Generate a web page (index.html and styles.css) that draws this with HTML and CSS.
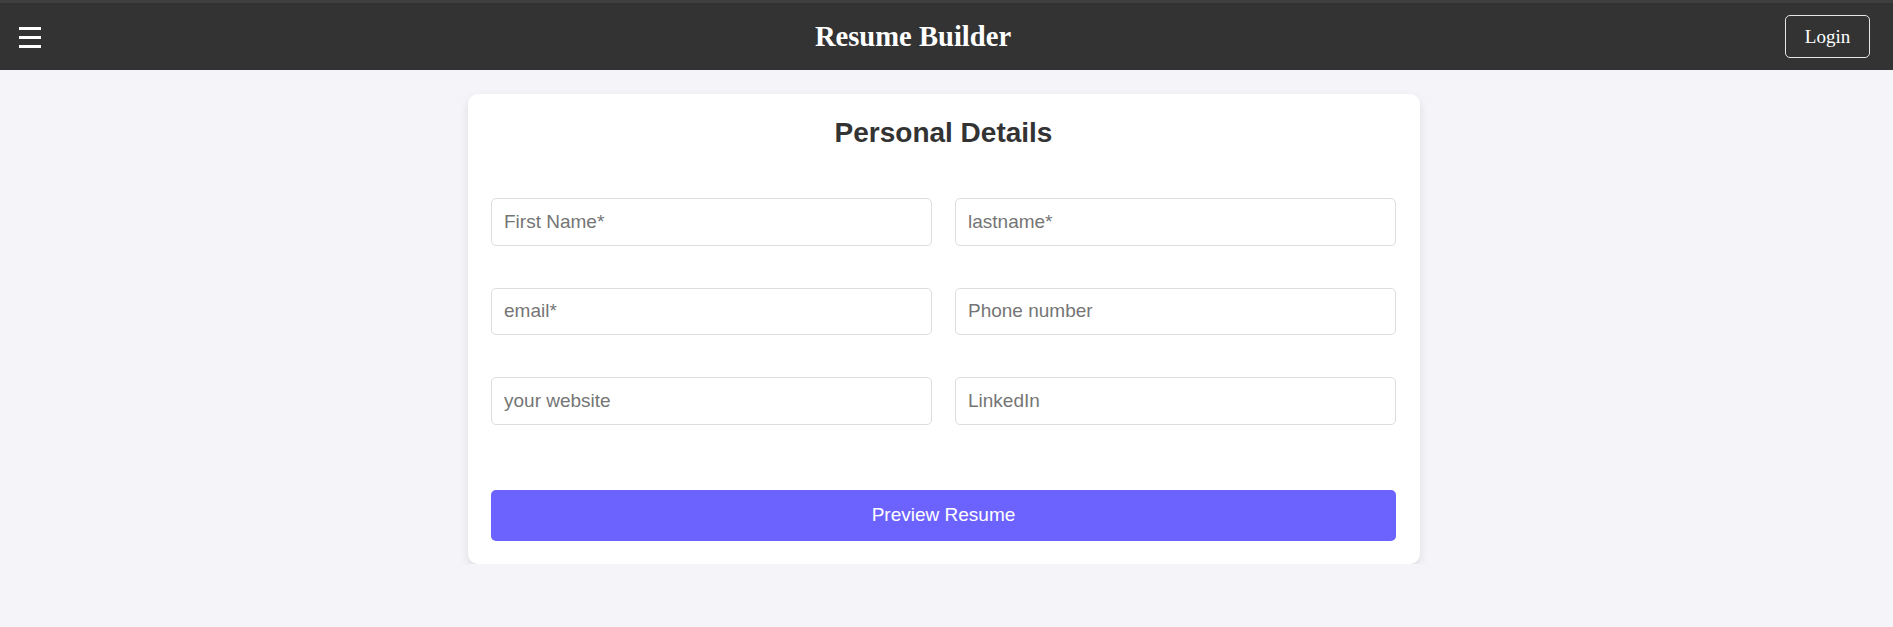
FILE: index.html
```html
<!DOCTYPE html>
<html lang="en">
<head>
<meta charset="UTF-8">
<title>Resume Builder</title>
<link rel="stylesheet" href="styles.css">
</head>
<body>
<header class="navbar">
  <button class="menu-btn" aria-label="Menu">
    <span class="bar"></span><span class="bar"></span><span class="bar"></span>
  </button>
  <h1 class="brand">Resume Builder</h1>
  <button class="login-btn">Login</button>
</header>
<main class="page">
  <section class="card">
    <h2 class="card-title">Personal Details</h2>
    <form class="form">
      <div class="grid">
        <input class="field" type="text" placeholder="First Name*">
        <input class="field" type="text" placeholder="lastname*">
        <input class="field" type="email" placeholder="email*">
        <input class="field" type="text" placeholder="Phone number">
        <input class="field" type="text" placeholder="your website">
        <input class="field" type="text" placeholder="LinkedIn">
      </div>
      <button type="button" class="preview-btn">Preview Resume</button>
    </form>
  </section>
</main>
</body>
</html>
```
FILE: styles.css
```css
* { box-sizing: border-box; }
html, body { margin: 0; padding: 0; }
body {
  background: #f4f4f9;
  font-family: "Liberation Sans", Arial, sans-serif;
}
.navbar {
  height: 70px;
  background: #333;
  border-top: 3px solid #3f3f3f;
  display: flex;
  align-items: center;
  justify-content: space-between;
  padding: 0 23px 0 19px;
}
.menu-btn {
  background: none;
  border: 0;
  padding: 0;
  width: 22px;
  display: flex;
  flex-direction: column;
  gap: 6px;
  margin-top: 1px;
  cursor: pointer;
}
.bar {
  display: block;
  height: 3px;
  width: 22px;
  background: #fff;
}
.brand {
  margin: 0;
  color: #fff;
  font-family: "Liberation Serif", "Times New Roman", serif;
  font-weight: bold;
  font-size: 28.6px;
}
.login-btn {
  width: 85px;
  height: 43px;
  background: transparent;
  color: #fff;
  border: 1px solid #e6e6e6;
  border-radius: 5px;
  font-family: "Liberation Serif", "Times New Roman", serif;
  font-size: 19px;
  cursor: pointer;
}
.page {
  display: flex;
  justify-content: center;
  padding-top: 24px;
}
.card {
  width: 952px;
  margin-left: -5px;
  background: #fff;
  border-radius: 10px;
  box-shadow: 0 4px 10px rgba(0, 0, 0, 0.1);
  padding: 23px 24px 23px 23px;
}
.card-title {
  margin: 0 0 49px;
  text-align: center;
  font-size: 28px;
  font-weight: bold;
  color: #333;
}
.grid {
  display: grid;
  grid-template-columns: 1fr 1fr;
  column-gap: 23px;
  row-gap: 42px;
}
.field {
  height: 47.5px;
  width: 100%;
  border: 1px solid #ddd;
  border-radius: 5px;
  padding: 0 12px;
  font-family: "Liberation Sans", Arial, sans-serif;
  font-size: 19px;
  color: #333;
  outline: none;
}
.field::placeholder { color: #757575; }
.preview-btn {
  display: block;
  width: 100%;
  height: 51px;
  margin-top: 65px;
  background: #6c63ff;
  color: #fff;
  border: 0;
  border-radius: 5px;
  font-family: "Liberation Sans", Arial, sans-serif;
  font-size: 19px;
  cursor: pointer;
}
```
